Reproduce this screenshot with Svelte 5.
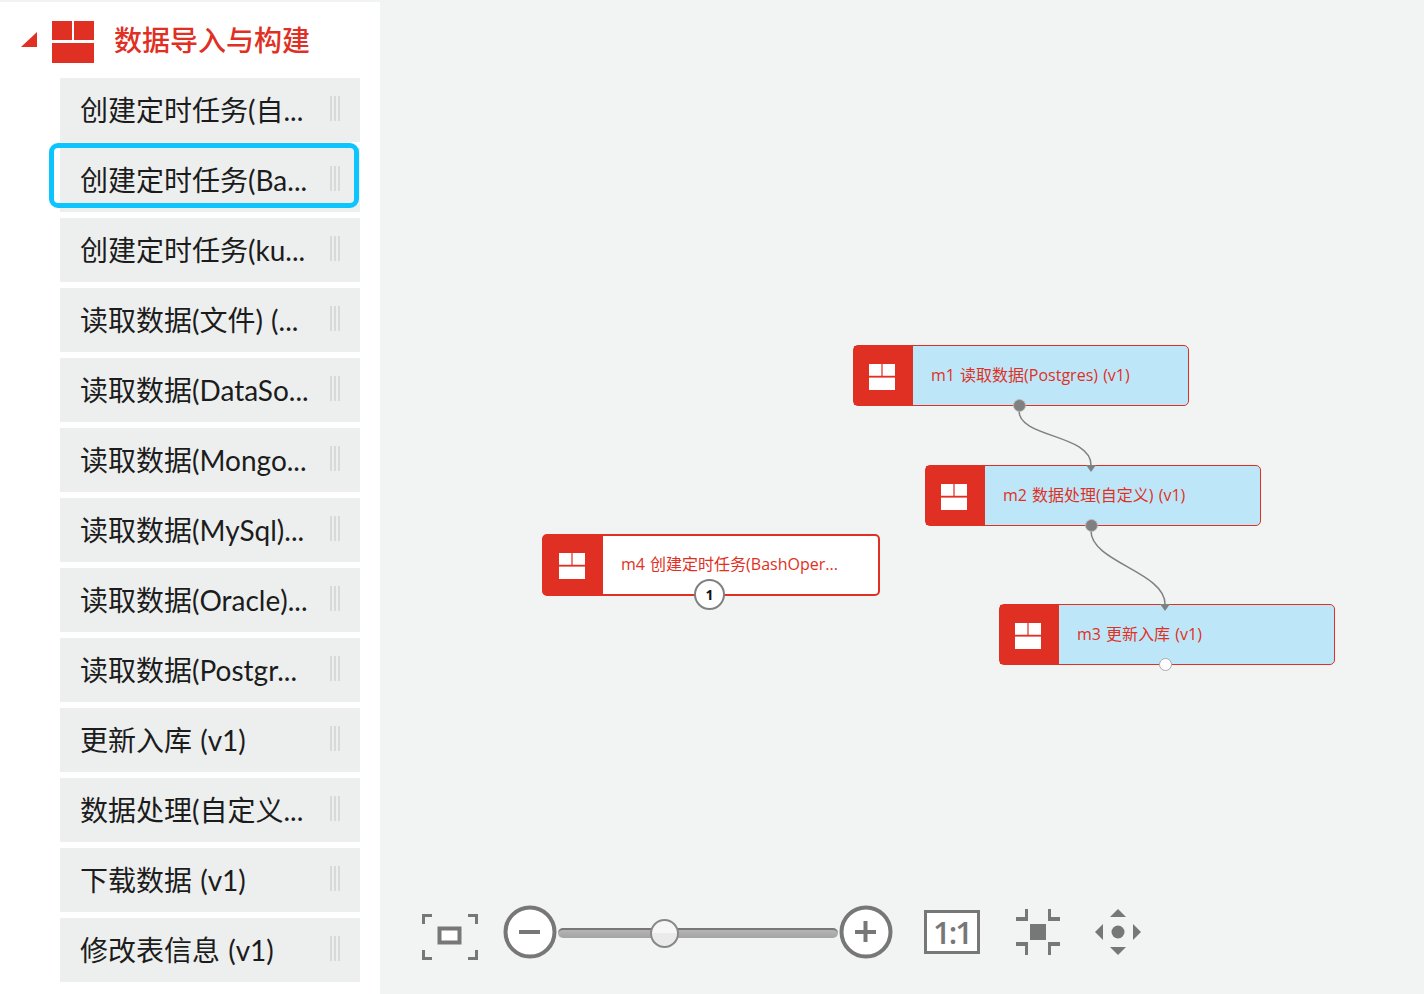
<script>
  const items = [
    "创建定时任务(自...",
    "创建定时任务(Ba...",
    "创建定时任务(ku...",
    "读取数据(文件) (...",
    "读取数据(DataSo...",
    "读取数据(Mongo...",
    "读取数据(MySql)...",
    "读取数据(Oracle)...",
    "读取数据(Postgr...",
    "更新入库 (v1)",
    "数据处理(自定义...",
    "下载数据 (v1)",
    "修改表信息 (v1)"
  ];

  // canvas coordinates, origin at the left edge of the canvas
  const nodes = [
    { id: "m1", label: "m1 读取数据(Postgres) (v1)", x: 473, y: 345, port: "used", arrow: false },
    { id: "m2", label: "m2 数据处理(自定义) (v1)", x: 545, y: 465, port: "used", arrow: true },
    { id: "m3", label: "m3 更新入库 (v1)", x: 619, y: 604, port: "free", arrow: true },
    { id: "m4", label: "m4 创建定时任务(BashOper...", x: 162, y: 534, port: "badge", arrow: false, selected: true }
  ];
</script>

{#snippet logo(cls)}
  <svg class={cls} viewBox="0 0 42 42" aria-hidden="true">
    <rect x="0" y="0" width="20" height="19" />
    <rect x="22" y="0" width="20" height="19" />
    <rect x="0" y="22" width="42" height="20" />
  </svg>
{/snippet}

<div class="page">
  <aside class="sidebar">
    <div class="group">
      <span class="caret"></span>
      {@render logo("group-logo")}
      <h2>数据导入与构建</h2>
    </div>
    <ul>
      {#each items as item, i}
        <li class:focused={i === 1}>
          <span class="name">{item}</span>
          <span class="handle"></span>
        </li>
      {/each}
    </ul>
  </aside>

  <main class="canvas">
    <svg class="wires" width="1044" height="992" aria-hidden="true">
      <path d="M639 411 C639 438 711 434 711 465" />
      <path d="M711 531 C711 562 785 572 785 604" />
    </svg>

    {#each nodes as n}
      <div class="node" class:selected={n.selected} style="left: {n.x}px; top: {n.y}px;">
        <div class="node-icon">{@render logo("node-logo")}</div>
        <div class="node-label">{n.label}</div>
        {#if n.arrow}<span class="arrow"></span>{/if}
        {#if n.port === "used"}<span class="port used"></span>{/if}
        {#if n.port === "free"}<span class="port free"></span>{/if}
        {#if n.port === "badge"}<span class="badge">1</span>{/if}
      </div>
    {/each}

    <div class="toolbar">
      <svg class="tool fit" width="56" height="46" viewBox="0 0 56 46">
        <path class="fill" d="M0 0h10v3H3v7H0zM46 0h10v10h-3V3h-7zM0 36h3v7h7v3H0zM53 36h3v10H46v-3h7z" />
        <rect x="17.5" y="14.5" width="20" height="14" fill="#fff" stroke="#777" stroke-width="4" />
      </svg>

      <svg class="tool round first" width="54" height="54" viewBox="0 0 54 54">
        <circle cx="27" cy="27" r="24.5" fill="#fff" stroke="#777" stroke-width="4" />
        <rect x="16" y="25" width="21" height="4" fill="#777" />
      </svg>

      <div class="slider">
        <span class="knob"></span>
      </div>

      <svg class="tool round" width="54" height="54" viewBox="0 0 54 54">
        <circle cx="27" cy="27" r="24.5" fill="#fff" stroke="#777" stroke-width="4" />
        <rect x="16" y="25" width="21" height="4" fill="#777" />
        <rect x="24.5" y="16" width="4" height="21" fill="#777" />
      </svg>

      <div class="one-to-one">1:1</div>

      <svg class="tool center" width="44" height="46" viewBox="0 0 44 46">
        <path class="fill" d="M0 8h9V0h3v12H0zM32 0h3v8h9v4H32zM0 33h12v13H9V37H0zM32 33h12v4h-9v9h-3z" />
        <rect x="14" y="15" width="16" height="16" fill="#777" />
      </svg>

      <svg class="tool move" width="46" height="46" viewBox="0 0 46 46">
        <path class="fill" d="M23 0l8 8H15zM23 46l-8-8h16zM0 23l8-8v16zM46 23l-8 8V15z" />
        <circle cx="23" cy="23" r="6.5" fill="#777" />
      </svg>
    </div>
  </main>
</div>

<style>
  :global(body) {
    margin: 0;
    background: #f2f4f4;
  }

  .page {
    display: flex;
    height: 994px;
    overflow: hidden;
    font-family: Lato, "Noto Sans CJK SC", sans-serif;
  }

  .sidebar {
    width: 380px;
    flex: none;
    margin-top: 2px;
    background: #fff;
  }

  .group {
    height: 76px;
    box-sizing: border-box;
    padding: 19px 0 0 21px;
    display: flex;
    align-items: flex-start;
  }

  .caret {
    width: 0;
    height: 0;
    margin-top: 11px;
    border-style: solid;
    border-width: 0 0 15px 16px;
    border-color: transparent transparent #e03024 transparent;
  }

  .group-logo {
    width: 42px;
    height: 42px;
    margin-left: 15px;
    fill: #e03024;
  }

  h2 {
    margin: 0 0 0 20px;
    font-size: 28px;
    line-height: 38px;
    font-weight: 500;
    color: #e03024;
  }

  ul {
    list-style: none;
    margin: 0 20px 0 60px;
    padding: 0;
    display: flex;
    flex-direction: column;
    gap: 6px;
  }

  li {
    position: relative;
    height: 64px;
    padding: 0 18px 0 20px;
    display: flex;
    align-items: center;
    justify-content: space-between;
    background: #edefef;
  }

  li.focused::after {
    content: "";
    position: absolute;
    left: -11px;
    right: 1px;
    top: -5px;
    bottom: 4px;
    border: 5px solid #0cc5ff;
    border-radius: 9px;
  }

  .name {
    font-size: 28px;
    line-height: 38px;
    word-spacing: 1px;
    color: #1c1c1c;
    white-space: nowrap;
  }

  .handle {
    width: 12px;
    height: 25px;
    margin-bottom: 3px;
    flex: none;
    background: repeating-linear-gradient(90deg, #d8d9d9 0 2px, #edefef 2px 4px);
  }

  .canvas {
    position: relative;
    flex: 1;
  }

  .wires {
    position: absolute;
    left: 0;
    top: 0;
  }

  .wires path {
    fill: none;
    stroke: #808080;
    stroke-width: 1.5;
  }

  .node {
    position: absolute;
    width: 336px;
    height: 61px;
    box-sizing: border-box;
    display: flex;
    background: #bde7f9;
    border: 1px solid #e03024;
    border-radius: 5px;
  }

  .node.selected {
    width: 338px;
    height: 62px;
    background: #fff;
    border-width: 2.5px;
  }

  .node-icon {
    width: 59px;
    flex: none;
    box-sizing: border-box;
    padding: 2px 4px 0 0;
    display: flex;
    align-items: center;
    justify-content: center;
    background: #e03024;
  }

  .node-logo {
    width: 26px;
    height: 26px;
    fill: #fff;
  }

  .node-label {
    margin-left: 18px;
    padding-bottom: 2px;
    align-self: center;
    font-family: "Open Sans", "Noto Sans CJK SC", sans-serif;
    font-size: 16px;
    line-height: 20px;
    word-spacing: 1px;
    color: #e03024;
    white-space: nowrap;
  }

  .arrow {
    position: absolute;
    left: 160px;
    top: -1px;
    width: 0;
    height: 0;
    border-style: solid;
    border-width: 7px 5px 0 5px;
    border-color: #808080 transparent transparent transparent;
  }

  .port {
    position: absolute;
    left: 159px;
    bottom: -7px;
    width: 13px;
    height: 13px;
    box-sizing: border-box;
    border-radius: 50%;
  }

  .port.used {
    background: #808080;
    border: 1px solid #bbb;
  }

  .port.free {
    background: #fff;
    border: 1px solid #aaa;
  }

  .badge {
    position: absolute;
    left: 150px;
    bottom: -16px;
    width: 31px;
    height: 31px;
    box-sizing: border-box;
    display: flex;
    align-items: center;
    justify-content: center;
    background: #fff;
    border: 2.5px solid #808080;
    border-radius: 50%;
    font-family: "Open Sans", sans-serif;
    font-size: 14px;
    font-weight: 700;
    color: #111;
  }

  .toolbar {
    position: absolute;
    left: 42px;
    top: 904px;
    display: flex;
    align-items: center;
  }

  .fill {
    fill: #777;
  }

  .tool {
    display: block;
    flex: none;
  }

  .fit {
    margin-top: 10px;
  }

  .first {
    margin-left: 25px;
  }

  .slider {
    position: relative;
    width: 280px;
    height: 10px;
    margin: 1px 1px 0 1px;
    box-sizing: border-box;
    border-top: 2px solid #777;
    border-radius: 5px;
    background: linear-gradient(#b4b4b4, #a4a4a4);
  }

  .knob {
    position: absolute;
    left: 92px;
    top: -11px;
    width: 29px;
    height: 29px;
    box-sizing: border-box;
    border: 2px solid #888;
    border-radius: 50%;
    background: linear-gradient(#f6f6f6 50%, #eaeaea 50%);
  }

  .one-to-one {
    width: 56px;
    height: 44px;
    margin-left: 31px;
    box-sizing: border-box;
    display: flex;
    align-items: center;
    justify-content: center;
    background: #fff;
    border: 3px solid #777;
    font-family: "Open Sans", sans-serif;
    font-size: 31px;
    font-weight: 600;
    letter-spacing: -2px;
    color: #777;
  }

  .center {
    margin-left: 36px;
  }

  .move {
    margin-left: 35px;
  }
</style>
